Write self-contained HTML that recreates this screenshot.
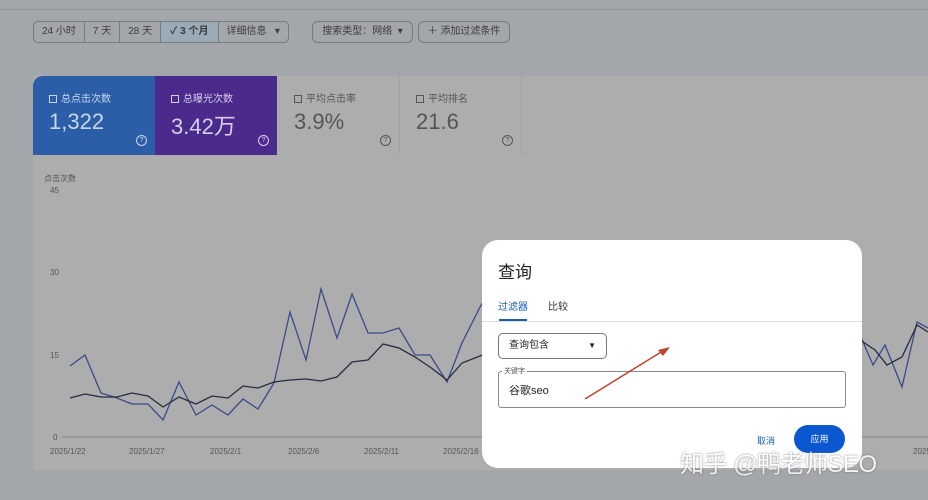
<!DOCTYPE html>
<html><head><meta charset="utf-8"><style>
*{margin:0;padding:0;box-sizing:border-box}
body{width:928px;height:500px;overflow:hidden;background:#a3a6aa;font-family:"Liberation Sans","Noto Sans CJK SC",sans-serif;position:relative}
.abs{position:absolute;white-space:nowrap}
.topline{left:0;top:9px;width:928px;height:1px;background:#8e9195}
.seg{left:33px;top:21px;height:22px;border:1px solid #777a7e;border-radius:5px;display:flex;font-size:10px;color:#3a3c40}
.seg div{padding:0 8px;line-height:20px;border-right:1px solid #777a7e}
.seg div:last-child{border-right:none;padding:0 8px}
.btn{top:21px;height:22px;border:1px solid #777a7e;border-radius:6px;font-size:10px;color:#3a3c40;line-height:20px;text-align:center}
.card{left:33px;top:76px;width:895px;height:394px;background:#adadad}
.tile{top:76px;height:79px;width:122px;font-size:10px;padding:14px 0 0 16px}
.tile .v{font-size:22px;margin-top:4px}
.q{position:absolute;right:8px;bottom:9px;width:11px;height:11px;border:1px solid currentColor;border-radius:50%;font-size:7px;text-align:center;line-height:9px}
.cb{display:inline-block;width:8px;height:8px;border:1px solid currentColor;margin-right:4px;vertical-align:-1px}
.axis{font-size:8px;color:#555}
.dlg{left:482px;top:240px;width:380px;height:228px;background:#fff;border-radius:16px}
</style></head><body>
<div class="abs topline"></div>
<div class="abs seg"><div>24 小时</div><div>7 天</div><div>28 天</div><div style="background:#9aaab6;font-weight:bold;padding:0 9px">✓ 3 个月</div><div>详细信息 &nbsp;&nbsp;▾</div></div>
<div class="abs btn" style="left:312px;width:101px">搜索类型：网络 &nbsp;▾</div>
<div class="abs btn" style="left:418px;width:92px">＋ 添加过滤条件</div>
<div class="abs card"></div>
<div class="abs tile" style="left:33px;background:#2c5ea8;color:#c8d6ee;border-top-left-radius:10px"><span class="cb"></span>总点击次数<div class="v">1,322</div><div class="q">?</div></div>
<div class="abs tile" style="left:155px;background:#4a2a8a;color:#d9cdef"><span class="cb"></span>总曝光次数<div class="v">3.42万</div><div class="q">?</div></div>
<div class="abs tile" style="left:278px;color:#555;border-right:1px solid #a2a2a2"><span class="cb"></span>平均点击率<div class="v">3.9%</div><div class="q">?</div></div>
<div class="abs tile" style="left:400px;color:#555;border-right:1px solid #a2a2a2"><span class="cb"></span>平均排名<div class="v">21.6</div><div class="q">?</div></div>
<div class="abs axis" style="left:44px;top:173px">点击次数</div>
<div class="abs axis" style="left:50px;top:186px">45</div>
<div class="abs axis" style="left:50px;top:268px">30</div>
<div class="abs axis" style="left:50px;top:351px">15</div>
<div class="abs axis" style="left:53px;top:433px">0</div>
<div class="abs axis" style="left:50px;top:447px">2025/1/22</div>
<div class="abs axis" style="left:129px;top:447px">2025/1/27</div>
<div class="abs axis" style="left:210px;top:447px">2025/2/1</div>
<div class="abs axis" style="left:288px;top:447px">2025/2/6</div>
<div class="abs axis" style="left:364px;top:447px">2025/2/11</div>
<div class="abs axis" style="left:443px;top:447px">2025/2/16</div>
<div class="abs axis" style="left:913px;top:447px">2025</div>
<svg class="abs" style="left:0;top:0" width="928" height="500">
<line x1="62" y1="437" x2="928" y2="437" stroke="#888" stroke-width="1"/>
<polyline fill="none" stroke="#3b4a8c" stroke-width="1.3" points="70,366 85,355 101,393 117,398 132,404 148,404 163,420 179,382 196,415 212,405 228,415 243,399 258,409 274,383 290,312 306,360 321,289 337,338 352,294 368,333 383,333 399,328 415,355 430,355 447,382 462,343 480,307 490,290"/>
<polyline fill="none" stroke="#2a2a44" stroke-width="1.3" points="70,398 85,394 101,397 117,397 132,393 148,396 163,407 179,397 196,404 212,396 228,398 243,386 258,388 274,382 290,380 306,379 321,381 337,377 352,362 368,360 383,344 399,348 415,357 430,367 447,380 462,363 480,356 490,352"/>
<polyline fill="none" stroke="#3b4a8c" stroke-width="1.3" points="860,335 873,365 885,345 902,387 917,322 928,328"/>
<polyline fill="none" stroke="#2a2a44" stroke-width="1.3" points="860,340 875,350 887,365 902,357 917,325 928,332"/>
</svg>
<div class="abs dlg">
<div class="abs" style="left:16px;top:18px;font-size:17px;color:#222">查询</div>
<div class="abs" style="left:16px;top:58px;font-size:10px;color:#1a5fb4">过滤器</div>
<div class="abs" style="left:66px;top:58px;font-size:10px;color:#333">比较</div>
<div class="abs" style="left:17px;top:79px;width:28px;height:2px;background:#1a5fb4"></div>
<div class="abs" style="left:0;top:81px;width:380px;height:1px;background:#ddd"></div>
<div class="abs" style="left:16px;top:93px;width:109px;height:26px;border:1px solid #777;border-radius:5px;font-size:10px;line-height:24px;padding-left:10px;color:#222">查询包含<span style="position:absolute;right:10px;font-size:8px">▼</span></div>
<div class="abs" style="left:16px;top:131px;width:348px;height:37px;border:1px solid #888;border-radius:3px;font-size:11px;padding:10px 0 0 10px;color:#222">谷歌seo</div>
<div class="abs" style="left:20px;top:126px;font-size:7px;color:#555;background:#fff;padding:0 2px">关键字</div>
<div class="abs" style="left:275px;top:194px;font-size:9px;color:#1a5fb4">取消</div>
<div class="abs" style="left:312px;top:185px;width:51px;height:28px;border-radius:14px;background:#0b57d0;color:#fff;font-size:9px;text-align:center;line-height:28px">应用</div>
</div>
<svg class="abs" style="left:0;top:0" width="928" height="500"><line x1="585" y1="399" x2="666" y2="349" stroke="#c0432a" stroke-width="1.5"/><polygon points="670,347 658,350 663,356" fill="#c0432a"/></svg>
<div class="abs" style="left:680px;top:444px;font-size:24px;color:#fff;opacity:.85;text-shadow:0 0 2px #666;letter-spacing:-0.5px">知乎 @鸭老师SEO</div>
</body></html>
